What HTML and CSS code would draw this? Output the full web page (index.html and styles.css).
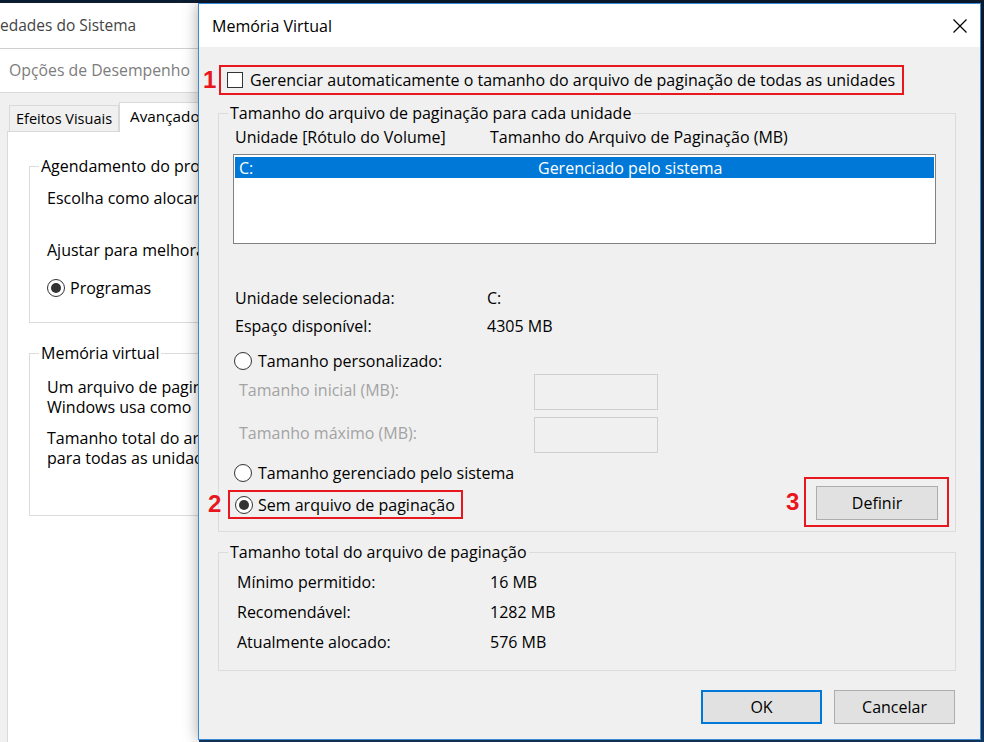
FILE: index.html
```html
<!DOCTYPE html>
<html lang="pt-BR">
<head>
<meta charset="utf-8">
<title>Memória Virtual</title>
<link rel="stylesheet" href="styles.css">
</head>
<body>
<div class="desktop">
  <section class="bgwin">
    <div class="bg-title">edades do Sistema</div>
    <div class="bg-sub">Opções de Desempenho</div>
    <div class="bg-body">
      <div class="tabs">
        <div class="tab">Efeitos Visuais</div>
        <div class="tab active">Avançado</div>
      </div>
      <div class="tabpanel">
        <div class="gb gb-sched">
          <div class="gb-title">Agendamento do pro</div>
          <p class="bl l-escolha">Escolha como alocar</p>
          <p class="bl l-ajustar">Ajustar para melhora</p>
          <div class="bl l-radio"><span class="radio checked"></span>Programas</div>
        </div>
        <div class="gb gb-vm">
          <div class="gb-title">Memória virtual</div>
          <p class="bl l-um">Um arquivo de pagin<br>Windows usa como</p>
          <p class="bl l-tam">Tamanho total do ar<br>para todas as unidad</p>
        </div>
      </div>
    </div>
  </section>

  <section class="dialog">
    <header class="dlg-title">
      <span>Memória Virtual</span>
      <svg class="close" width="16" height="16" viewBox="0 0 16 16"><path d="M1.5 1.5L14.5 14.5M14.5 1.5L1.5 14.5" stroke="#000" stroke-width="1.2" fill="none"/></svg>
    </header>
    <div class="dlg-body">
      <div class="cb-row">
        <span class="mark m1">1</span>
        <label class="hl hl-cb"><span class="checkbox"></span>Gerenciar automaticamente o tamanho do arquivo de paginação de todas as unidades</label>
      </div>

      <div class="gb gb-drives">
        <div class="gb-title">Tamanho do arquivo de paginação para cada unidade</div>
        <div class="list-head"><span class="col1">Unidade [Rótulo do Volume]</span><span>Tamanho do Arquivo de Paginação (MB)</span></div>
        <div class="listbox">
          <div class="list-row"><span class="lcol1">C:</span><span>Gerenciado pelo sistema</span></div>
        </div>
        <div class="kv kv-first"><span class="k">Unidade selecionada:</span><span>C:</span></div>
        <div class="kv"><span class="k">Espaço disponível:</span><span>4305 MB</span></div>
        <div class="opt opt-custom"><span class="radio"></span>Tamanho personalizado:</div>
        <div class="field"><span class="flabel">Tamanho inicial (MB):</span><span class="tbox"></span></div>
        <div class="field f2"><span class="flabel">Tamanho máximo (MB):</span><span class="tbox"></span></div>
        <div class="opt opt-sys"><span class="radio"></span>Tamanho gerenciado pelo sistema</div>
        <div class="last-row">
          <span class="mark m2">2</span>
          <div class="hl hl-none"><span class="radio checked"></span>Sem arquivo de paginação</div>
          <div class="set-group">
            <span class="mark m3">3</span>
            <div class="hl hl-set"><button class="btn btn-set" type="button">Definir</button></div>
          </div>
        </div>
      </div>

      <div class="gb gb-total">
        <div class="gb-title">Tamanho total do arquivo de paginação</div>
        <div class="tot-row"><span class="k">Mínimo permitido:</span><span>16 MB</span></div>
        <div class="tot-row"><span class="k">Recomendável:</span><span>1282 MB</span></div>
        <div class="tot-row"><span class="k">Atualmente alocado:</span><span>576 MB</span></div>
      </div>

      <div class="actions">
        <button class="btn btn-ok" type="button">OK</button>
        <button class="btn btn-cancel" type="button">Cancelar</button>
      </div>
    </div>
  </section>
</div>
</body>
</html>
```
FILE: styles.css
```css
* { box-sizing: border-box; }
html, body { margin: 0; padding: 0; }
body {
  width: 984px;
  height: 742px;
  overflow: hidden;
  font-family: "Open Sans", "Noto Sans", "DejaVu Sans", sans-serif;
  font-size: 16px;
  line-height: 20px;
  color: #000;
  background: #0e2440;
}
.desktop {
  position: relative;
  width: 984px;
  height: 742px;
  background: linear-gradient(180deg, #0b1b30 0%, #143a62 100%);
  overflow: hidden;
}
p { margin: 0; }

/* ---------- background window ---------- */
.bgwin {
  position: absolute;
  left: 0;
  top: 3px;
  bottom: 0;
  width: 199px;
  overflow: hidden;
  background: #f0f0f0;
  display: flex;
  flex-direction: column;
}
.bg-title {
  height: 46px;
  flex: none;
  background: #fff;
  border-bottom: 1px solid #cfcfcf;
  line-height: 45px;
  font-size: 15.5px;
  color: #444;
  white-space: nowrap;
}
.bg-sub {
  height: 44px;
  flex: none;
  background: #fff;
  border-bottom: 1px solid #d9d9d9;
  line-height: 43px;
  padding-left: 9px;
  font-size: 15.8px;
  color: #7d7d7d;
  white-space: nowrap;
}
.bg-body {
  flex: 1;
  display: flex;
  flex-direction: column;
  padding: 9px 0 0 7px;
}
.tabs {
  display: flex;
  align-items: flex-end;
  padding-left: 2px;
  margin-bottom: -1px;
  position: relative;
  z-index: 1;
}
.tab {
  height: 26px;
  margin-bottom: 1px;
  padding: 0 6px;
  border: 1px solid #d9d9d9;
  border-bottom: 0;
  background: #f0f0f0;
  font-size: 14.5px;
  line-height: 25px;
  white-space: nowrap;
  flex: none;
}
.tab.active {
  height: 30px;
  width: 120px;
  margin-bottom: 0;
  padding: 0 10px;
  background: #fff;
  line-height: 27px;
  font-size: 15.3px;
}
.tabpanel {
  flex: 1;
  background: #fff;
  border: 1px solid #d9d9d9;
  border-right: 0;
  border-bottom: 0;
  padding: 0 0 0 21px;
}
.gb { border: 1px solid #dcdcdc; }
.gb-title {
  display: block;
  width: fit-content;
  margin: -11px 0 0 9px;
  padding: 0 2px;
  line-height: 20px;
  white-space: nowrap;
}
.tabpanel .gb-title { background: #fff; }
.bl { white-space: nowrap; line-height: 20px; }
.gb-sched {
  width: 320px;
  margin-top: 34px;
  padding: 0 0 24px 17px;
}
.gb-sched .gb-title,
.gb-vm .gb-title { margin-left: -8px; }
.l-escolha { margin-top: 12px; }
.l-ajustar { margin-top: 32px; }
.l-radio {
  margin-top: 18px;
  display: flex;
  align-items: center;
  height: 20px;
}
.l-radio .radio { margin-right: 5px; }
.gb-vm {
  width: 320px;
  margin-top: 30px;
  padding: 0 0 47px 17px;
}
.l-um { margin-top: 14px; }
.l-tam { margin-top: 11px; }

/* ---------- controls ---------- */
.radio {
  width: 18px;
  height: 18px;
  border: 1px solid #333;
  border-radius: 50%;
  background: #fff;
  margin-right: 6px;
  flex: none;
  display: flex;
  align-items: center;
  justify-content: center;
}
.radio.checked::after {
  content: "";
  width: 10px;
  height: 10px;
  border-radius: 50%;
  background: #333;
}
.checkbox {
  width: 16px;
  height: 16px;
  border: 1px solid #333;
  background: #fff;
  margin-right: 7px;
  flex: none;
}
.btn {
  font: inherit;
  color: #000;
  background: #e1e1e1;
  border: 1px solid #adadad;
  height: 34px;
  width: 121px;
  padding: 0;
  line-height: 30px;
  border-radius: 0;
}

/* ---------- dialog ---------- */
.dialog {
  position: absolute;
  left: 198px;
  top: 3px;
  width: 783px;
  height: 737px;
  border: 1px solid #3a8ad6;
  background: #f0f0f0;
  box-shadow: 0 0 14px rgba(0, 0, 0, 0.35);
  display: flex;
  flex-direction: column;
  z-index: 2;
}
.dlg-title {
  height: 43px;
  flex: none;
  background: #fff;
  display: flex;
  align-items: center;
  justify-content: space-between;
  padding: 0 12px 0 13px;
}
.close { display: block; }
.dlg-body {
  flex: 1;
  padding: 0 24px 0 19px;
}
.dlg-body .gb-title { background: #f0f0f0; }

.mark {
  color: #e8161d;
  font-family: "Liberation Sans", Arial, sans-serif;
  font-weight: 700;
  font-size: 24px;
  line-height: 24px;
  flex: none;
}
.m1 { width: 16px; }
.m2 { width: 20px; margin-top: 15px; }
.m3 { width: 18px; }
.hl {
  border: 2px solid #e8161d;
  display: flex;
  align-items: center;
  white-space: nowrap;
}
.cb-row {
  display: flex;
  align-items: center;
  height: 30px;
  margin: 18px 0 0 -15px;
}
.hl-cb {
  width: 685px;
  height: 30px;
  padding-left: 6px;
}

.gb-drives {
  margin-top: 18px;
  padding: 0 19px 4px 14px;
}
.gb-drives .gb-title { margin-left: -5px; }
.list-head {
  margin-top: 4px;
  display: flex;
  padding-left: 2px;
  white-space: nowrap;
}
.col1 { width: 255px; flex: none; }
.listbox {
  margin-top: 7px;
  height: 90px;
  border: 1px solid #828282;
  background: #fff;
  padding: 2px 1px;
}
.list-row {
  height: 21px;
  background: #0078d7;
  color: #fff;
  display: flex;
  align-items: center;
  padding-left: 4px;
  white-space: nowrap;
}
.lcol1 { width: 299px; flex: none; }
.kv {
  display: flex;
  padding-left: 2px;
  white-space: nowrap;
}
.k { width: 252px; flex: none; }
.kv-first { margin-top: 44px; }
.kv + .kv { margin-top: 8px; }
.opt {
  display: flex;
  align-items: center;
  height: 20px;
  padding-left: 1px;
  white-space: nowrap;
}
.opt-custom { margin-top: 15px; }
.opt-sys { margin-top: 10px; }
.field {
  display: flex;
  align-items: center;
  height: 36px;
  margin-top: 3px;
}
.f2 { margin-top: 7px; }
.flabel {
  width: 301px;
  flex: none;
  padding-left: 6px;
  color: #a3a3a3;
  white-space: nowrap;
  margin-top: -4px;
}
.tbox {
  width: 124px;
  height: 36px;
  flex: none;
  border: 1px solid #cfcfcf;
  background: #f0f0f0;
}
.last-row {
  display: flex;
  align-items: flex-start;
  margin: -6px -13px 0 -25px;
}
.hl-none {
  margin-top: 13px;
  width: 235px;
  height: 29px;
  padding-left: 5px;
}
.hl-none .radio { margin-right: 5px; }
.set-group {
  margin-left: auto;
  display: flex;
  align-items: center;
  height: 50px;
}
.hl-set {
  display: block;
  width: 145px;
  height: 50px;
  padding: 7px 9px 5px 10px;
}
.btn-set { width: 122px; }

.gb-total {
  margin-top: 20px;
  padding: 0 0 18px 18px;
}
.gb-total .gb-title { margin-left: -9px; }
.tot-row {
  display: flex;
  margin-top: 10px;
  white-space: nowrap;
}
.tot-row .k { width: 253px; }

.actions {
  display: flex;
  justify-content: flex-end;
  gap: 12px;
  margin-top: 19px;
  padding-right: 1px;
}
.btn-ok { border: 2px solid #0078d7; }
```
